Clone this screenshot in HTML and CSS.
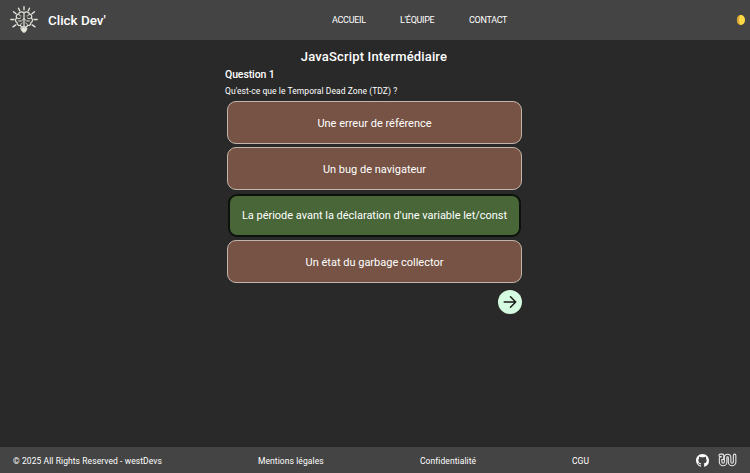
FILE: index.html
```html
<!DOCTYPE html>
<html lang="fr">
<head>
<meta charset="utf-8">
<title>Click Dev'</title>
<link rel="stylesheet" href="styles.css">
</head>
<body>
<header class="header">
  <a class="brand">
    <svg class="logo" viewBox="0 0 28 28" fill="none" stroke="#e5e5dc" stroke-linecap="round">
      <path stroke-width="1.4" d="M14 .8v3M8.5 2.2l1.2 2.6M19.5 2.2l-1.2 2.6M3.5 5.8l2.5 2M24.5 5.8L22 7.8M.8 13.5H4M24 13.5h3.2M3 20.8l2.8-1.9M25 20.8l-2.8-1.9"/>
      <path stroke-width="1.2" d="M14 7c-2-2-5.5-.7-5.5 1.2-2.2.3-2.8 2.4-1.8 3.8-1.8 1.3-1.3 4 .3 4.6 0 2.2 1.8 3.2 3.2 2.8.7 1.4 2.7 2 3.8.9M14 7c2-2 5.5-.7 5.5 1.2 2.2.3 2.8 2.4 1.8 3.8 1.8 1.3 1.3 4-.3 4.6 0 2.2-1.8 3.2-3.2 2.8-.7 1.4-2.7 2-3.8.9M14 7v14"/>
      <path stroke-width=".9" d="M9 8.2c0 1.2.8 1.8 2 1.8M19 8.2c0 1.2-.8 1.8-2 1.8M7.2 12c1 .9 2.6.9 3.4.1M20.8 12c-1 .9-2.6.9-3.4.1M14 12.5l-2.5 2.5H8.5M14 12.5l2.5 2.5h3M10.7 19.4c-.2-1.2.5-2.3 1.5-2.5M17.3 19.4c.2-1.2-.5-2.3-1.5-2.5"/>
      <path fill="#e5e5dc" stroke-width=".8" d="M11 21.8h6l-.6 2.7-1.4 1.7h-2l-1.4-1.7z"/>
    </svg>
    <span class="brand-name">Click Dev'</span>
  </a>
  <nav class="nav"><a>ACCUEIL</a><a>L'ÉQUIPE</a><a>CONTACT</a></nav>
  <svg class="moon" viewBox="0 0 10 12"><ellipse cx="5" cy="6" rx="4" ry="5" fill="#ffdb47"/><path d="M4.1 1.1a4 5 0 0 0 0 9.8C2.8 8.5 2.8 3.5 4.1 1.1z" fill="#d9a637"/><circle cx="5.7" cy="4" r=".6" fill="#e5b932"/><circle cx="6.4" cy="8" r=".7" fill="#edc13a"/></svg>
</header>
<main class="quiz">
  <h1 class="title">JavaScript Intermédiaire</h1>
  <section class="question">
    <h2 class="number">Question 1</h2>
    <p class="prompt">Qu'est-ce que le Temporal Dead Zone (TDZ) ?</p>
    <div class="answers">
      <button class="answer">Une erreur de référence</button>
      <button class="answer">Un bug de navigateur</button>
      <button class="answer correct">La période avant la déclaration d'une variable let/const</button>
      <button class="answer">Un état du garbage collector</button>
    </div>
    <button class="next" aria-label="Question suivante"><svg viewBox="0 0 24 24" fill="none" stroke="#171b18" stroke-width="1.5" stroke-linecap="round" stroke-linejoin="round"><path d="M6.2 12h11.4M12.5 6.8l5.2 5.2-5.2 5.2"/></svg></button>
  </section>
</main>
<footer class="footer">
  <span>© 2025 All Rights Reserved - westDevs</span>
  <a>Mentions légales</a>
  <a>Confidentialité</a>
  <a>CGU</a>
  <span class="social">
    <svg class="github" viewBox="0 0 16 16" fill="#fff"><path d="M8 0C3.58 0 0 3.58 0 8c0 3.54 2.29 6.53 5.47 7.59.4.07.55-.17.55-.38 0-.19-.01-.82-.01-1.49-2.01.37-2.53-.49-2.69-.94-.09-.23-.48-.94-.82-1.13-.28-.15-.68-.52-.01-.53.63-.01 1.08.58 1.23.82.72 1.21 1.87.87 2.33.66.07-.52.28-.87.51-1.07-1.78-.2-3.64-.89-3.64-3.95 0-.87.31-1.59.82-2.15-.08-.2-.36-1.02.08-2.12 0 0 .67-.21 2.2.82.64-.18 1.32-.27 2-.27s1.36.09 2 .27c1.53-1.04 2.2-.82 2.2-.82.44 1.1.16 1.92.08 2.12.51.56.82 1.27.82 2.15 0 3.07-1.87 3.75-3.65 3.95.29.25.54.73.54 1.48 0 1.07-.01 1.93-.01 2.2 0 .21.15.46.55.38A8.01 8.01 0 0 0 16 8c0-4.42-3.58-8-8-8z"/></svg>
    <svg class="wild" viewBox="0 0 19 14" fill="none" stroke-linecap="round" stroke-linejoin="round"><path stroke="#e6e6e6" stroke-width="3.6" d="M2.2 2.4H4.5V5.2H2.6V9a2.500 2.500 0 0 0 5 0V4.500a2 2 0 0 1 4 0V9a2.500 2.500 0 0 0 5 0V2.400"/><path stroke="#444" stroke-width="1.400" d="M2.200 2.400H4.500V5.200H2.600V9a2.500 2.500 0 0 0 5 0V4.500a2 2 0 0 1 4 0V9a2.500 2.500 0 0 0 5 0V2.400"/></svg>
  </span>
</footer>
</body>
</html>
```
FILE: styles.css
```css
* { box-sizing: border-box; }
body { margin: 0; height: 473px; display: flex; flex-direction: column; overflow: hidden; background: #292929; color: #fff; font-family: Roboto, sans-serif; }
h1, h2, p { margin: 0; font-weight: 500; white-space: nowrap; }
a, span { white-space: nowrap; }
button { font: inherit; color: inherit; padding: 0; white-space: nowrap; }
.header { height: 40px; flex: none; display: grid; grid-template-columns: 332px 1fr 14px; align-items: center; background: #444; }
.brand { display: flex; align-items: center; padding-left: 10px; gap: 10px; }
.logo { width: 28px; height: 28px; }
.brand-name { font-size: 13.5px; font-weight: 500; letter-spacing: -.04px; }
.nav { display: grid; grid-template-columns: 68px 69px 60px; font-size: 9px; font-weight: 400; letter-spacing: -.3px; }
.moon { width: 10px; height: 12px; }
.quiz { flex: 1; display: flex; flex-direction: column; align-items: center; padding: 7px 2px 0 0; }
.title { height: 19px; line-height: 19px; font-size: 13px; font-weight: 500; letter-spacing: .16px; }
.question { width: 298px; display: flex; flex-direction: column; }
.number { height: 17px; font-size: 10.5px; line-height: 18px; letter-spacing: -.1px; }
.prompt { height: 15px; font-size: 8.5px; font-weight: 400; line-height: 16px; letter-spacing: .06px; }
.answers { display: flex; flex-direction: column; gap: 3.3px; margin: 3.2px 0 0 2px; width: 295px; }
.answer { height: 43px; border: 1px solid #c1b4aa; border-radius: 9px; background: #765344; font-size: 11px; line-height: 13px; padding-top: 1px; }
.correct { width: 293px; align-self: center; border: 2px solid #0c120b; background: #486638; letter-spacing: -.02px; }
.next { align-self: flex-end; width: 24px; height: 24px; margin: 7.3px 1px 0 0; border: 0; border-radius: 50%; background: #d5fbe1; }
.next svg { display: block; width: 24px; height: 24px; }
.footer { height: 26px; flex: none; display: grid; grid-template-columns: 245px 162px 152px 124px 1fr; align-items: center; padding-left: 13px; background: #444; font-size: 8.5px; line-height: 28px; letter-spacing: .08px; }
.social { display: flex; align-items: center; gap: 9px; position: relative; top: -1px; }
.github { width: 13px; height: 13px; }
.wild { width: 19px; height: 14px; }
```
